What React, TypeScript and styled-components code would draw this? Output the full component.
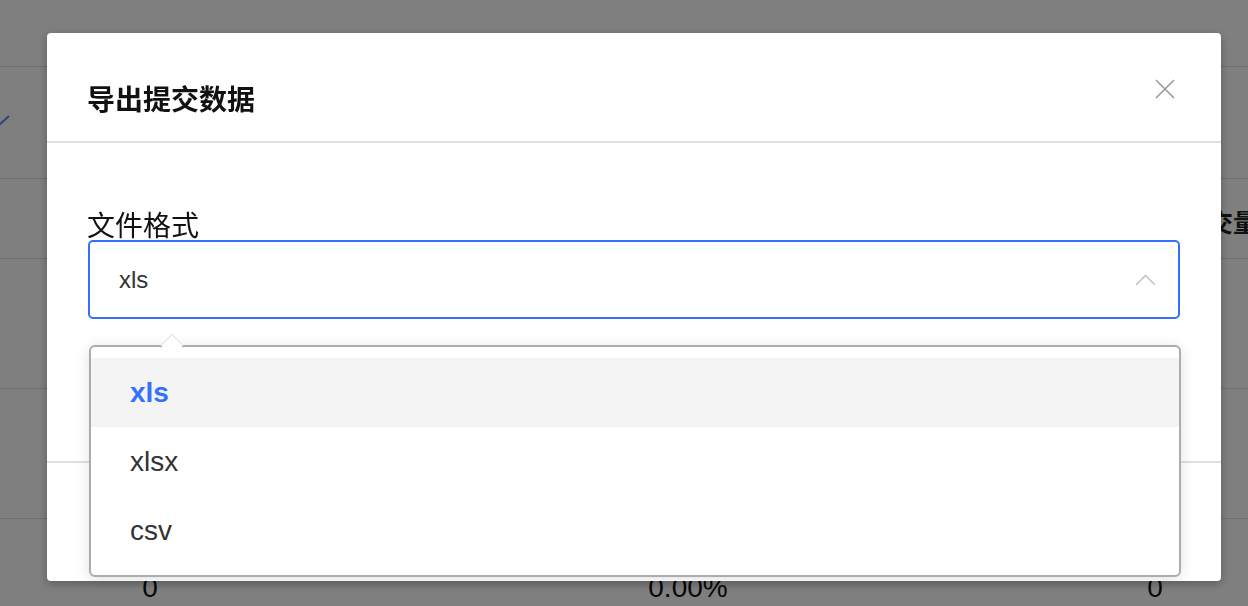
import React from "react";
import styled, { createGlobalStyle } from "styled-components";

const GlobalStyle = createGlobalStyle`
  html, body {
    margin: 0;
    padding: 0;
    overflow: hidden;
  }
  body {
    font-family: "Liberation Sans", "Noto Sans CJK SC", sans-serif;
    color: #111;
  }
  * { box-sizing: border-box; }
`;

const Page = styled.div`
  width: 1248px;
  height: 606px;
  overflow: hidden;
  background: #fff;
  display: flex;
  flex-direction: column;
`;

const TableRow = styled.div<{ $h?: number }>`
  flex-shrink: 0;
  height: ${(p) => (p.$h ? `${p.$h}px` : "auto")};
  border-bottom: 1px solid #dedede;
  display: grid;
  grid-template-columns: 300px 776px 158px;
  align-items: center;
`;

const DataRow = styled.div`
  flex: 1;
  display: grid;
  grid-template-columns: 300px 776px 158px;
  align-items: start;
  padding-top: 53px;
`;

const Cell = styled.div`
  text-align: center;
  font-size: 28px;
  line-height: 32px;
  color: #111;
  white-space: nowrap;
`;

const HeadCell = styled.div`
  font-size: 25px;
  line-height: 30px;
  font-weight: 700;
  color: #222;
  white-space: nowrap;
  padding-left: 107px;
  padding-top: 4px;
  font-family: "Noto Sans CJK SC", sans-serif;
`;

const TrendMark = styled.svg`
  display: block;
  margin-top: -6px;
`;

const Mask = styled.div`
  position: fixed;
  inset: 0;
  background: rgba(0, 0, 0, 0.5);
`;

const ModalLayer = styled.div`
  position: fixed;
  inset: 0;
  padding: 33px 0 0 47px;
`;

const Modal = styled.div`
  width: 1174px;
  height: 548px;
  background: #fff;
  border-radius: 4px;
  box-shadow: 0 3px 10px rgba(0, 0, 0, 0.28);
  display: flex;
  flex-direction: column;
`;

const Header = styled.div`
  height: 110px;
  flex-shrink: 0;
  display: flex;
  justify-content: space-between;
  align-items: flex-start;
  padding: 0 46px 0 40px;
  border-bottom: 2px solid #e0e0e0;
`;

const Title = styled.div`
  margin-top: 51px;
  font-family: "Noto Sans CJK SC", sans-serif;
  font-size: 28px;
  line-height: 28px;
  font-weight: 700;
  color: #111;
`;

const CloseButton = styled.button`
  margin-top: 46px;
  width: 20px;
  height: 20px;
  padding: 0;
  border: 0;
  background: none;
  cursor: pointer;
  display: block;
`;

const Body = styled.div`
  padding: 67px 41px 0 41px;
  height: 318px;
  flex-shrink: 0;
`;

const Label = styled.div`
  font-family: "Noto Sans CJK SC", sans-serif;
  font-size: 28px;
  line-height: 28px;
  color: #111;
  margin-bottom: 2px;
  margin-left: -1px;
`;

const SelectWrap = styled.div`
  position: relative;
`;

const SelectBox = styled.div`
  height: 79px;
  border: 2px solid #3370ff;
  border-radius: 5px;
  display: flex;
  align-items: center;
  justify-content: space-between;
  padding: 0 22px 0 29px;
  font-size: 24px;
  color: #333;
  background: #fff;
`;

const Dropdown = styled.div`
  position: absolute;
  top: 105px;
  left: 1px;
  width: 1092px;
  border: 2px solid #acacac;
  border-radius: 6px;
  background: #fff;
  padding: 11px 0 10px;
  box-shadow: 0 2px 14px rgba(0, 0, 0, 0.12);
  z-index: 2;
`;

const Tip = styled.div`
  position: absolute;
  top: -10px;
  left: 73px;
  width: 16px;
  height: 16px;
  background: #fff;
  border-top: 1px solid #e2e2e2;
  border-left: 1px solid #e2e2e2;
  transform: rotate(45deg);
`;

const Option = styled.div<{ $active?: boolean }>`
  position: relative;
  height: 69px;
  display: flex;
  align-items: center;
  padding-left: 39px;
  font-size: 28px;
  color: ${(p) => (p.$active ? "#3370ff" : "#333")};
  font-weight: ${(p) => (p.$active ? 700 : 400)};
  background: ${(p) => (p.$active ? "#f4f4f4" : "#fff")};
`;

const Footer = styled.div`
  flex: 1;
  border-top: 2px solid #e0e0e0;
`;

const options = ["xls", "xlsx", "csv"];

export default function App() {
  return (
    <>
      <GlobalStyle />
      <Page>
        <TableRow $h={67} />
        <TableRow $h={112}>
          <div>
            <TrendMark width="12" height="12" viewBox="0 0 12 12">
              <line x1="-1" y1="11" x2="9" y2="2" stroke="#5a86ff" strokeWidth="2" />
            </TrendMark>
          </div>
        </TableRow>
        <TableRow $h={80}>
          <div />
          <div />
          <HeadCell>提交量</HeadCell>
        </TableRow>
        <TableRow $h={130} />
        <TableRow $h={130} />
        <DataRow>
          <Cell>0</Cell>
          <Cell>0.00%</Cell>
          <Cell>0</Cell>
        </DataRow>
      </Page>
      <Mask />
      <ModalLayer>
        <Modal>
          <Header>
            <Title>导出提交数据</Title>
            <CloseButton aria-label="close">
              <svg width="20" height="20" viewBox="0 0 20 20">
                <path d="M1 1 L19 19 M19 1 L1 19" stroke="#9a9a9a" strokeWidth="1.6" fill="none" />
              </svg>
            </CloseButton>
          </Header>
          <Body>
            <Label>文件格式</Label>
            <SelectWrap>
              <SelectBox>
                <span>xls</span>
                <svg width="21" height="12" viewBox="0 0 21 12">
                  <polyline points="1,11 10.5,1.5 20,11" stroke="#c6c6c6" strokeWidth="1.6" fill="none" />
                </svg>
              </SelectBox>
              <Dropdown>
                <Tip />
                {options.map((o, i) => (
                  <Option key={o} $active={i === 0}>
                    {o}
                  </Option>
                ))}
              </Dropdown>
            </SelectWrap>
          </Body>
          <Footer />
        </Modal>
      </ModalLayer>
    </>
  );
}
